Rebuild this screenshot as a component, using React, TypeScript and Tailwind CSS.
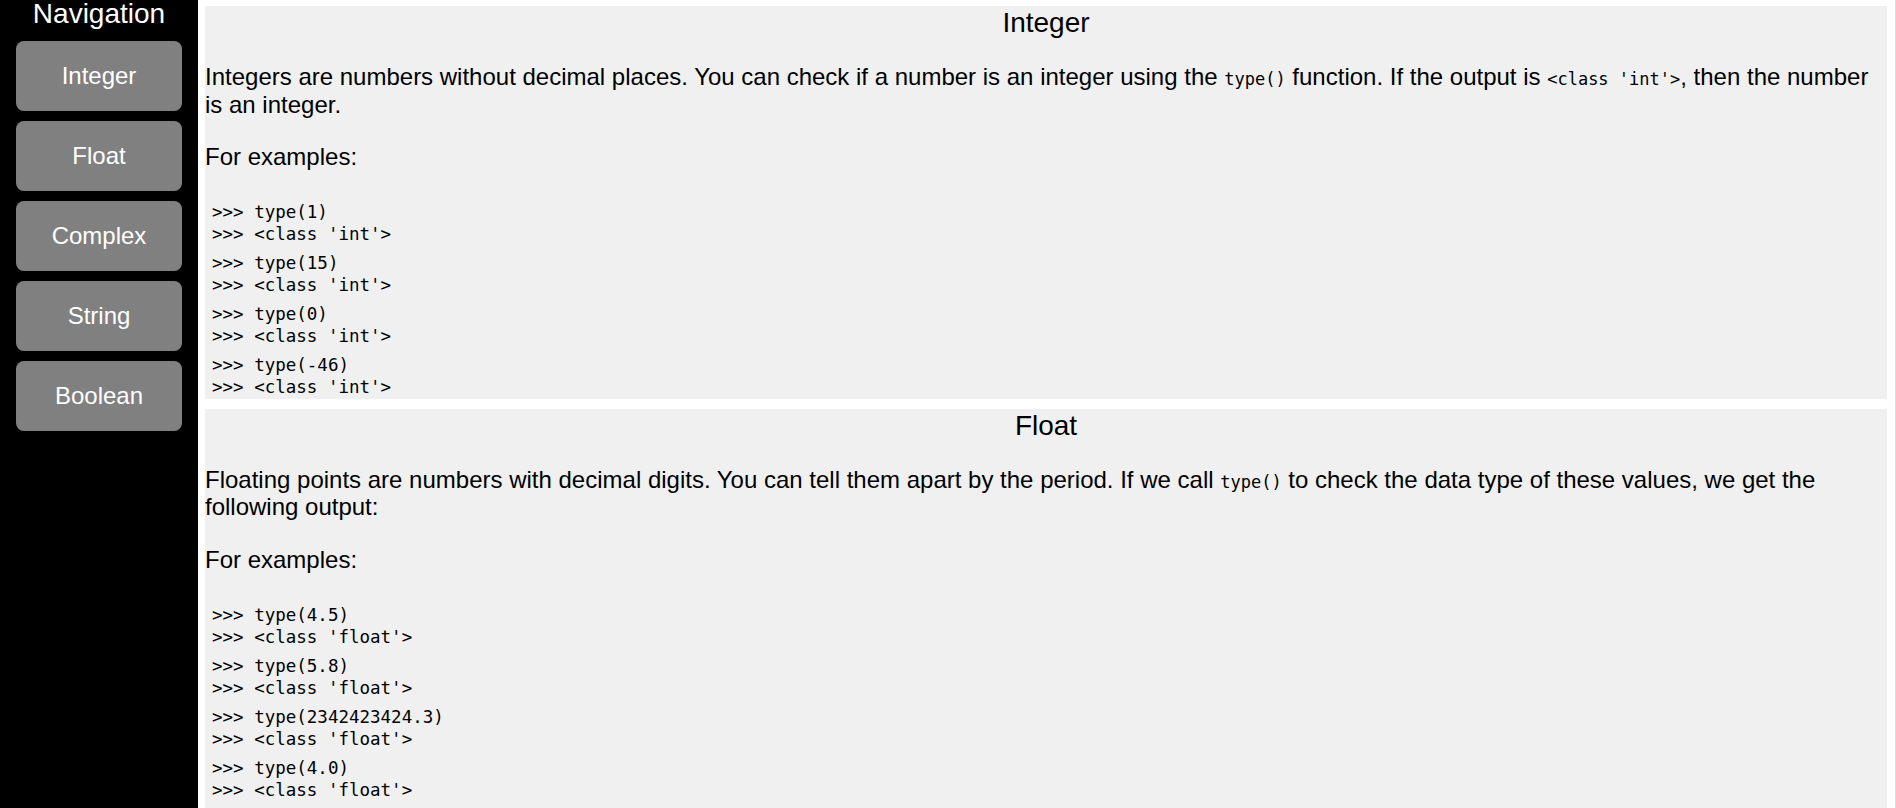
import React from "react";

const navItems = ["Integer", "Float", "Complex", "String", "Boolean"];

type Section = {
  title: string;
  body: React.ReactNode;
  examples: [string, string][];
};

const Code = ({ children }: { children: React.ReactNode }) => (
  <code className="font-['DejaVu_Sans_Mono','Liberation_Mono',monospace] text-[17px] leading-none">{children}</code>
);

const sections: Section[] = [
  {
    title: "Integer",
    body: (
      <>
        Integers are numbers without decimal places. You can check if a number is an integer using the{" "}
        <Code>type()</Code> function. If the output is <Code>{"<class 'int'>"}</Code>, then the number is an integer.
      </>
    ),
    examples: [
      [">>> type(1)", ">>> <class 'int'>"],
      [">>> type(15)", ">>> <class 'int'>"],
      [">>> type(0)", ">>> <class 'int'>"],
      [">>> type(-46)", ">>> <class 'int'>"],
    ],
  },
  {
    title: "Float",
    body: (
      <>
        Floating points are numbers with decimal digits. You can tell them apart by the period. If we call{" "}
        <Code>type()</Code> to check the data type of these values, we get the following output:
      </>
    ),
    examples: [
      [">>> type(4.5)", ">>> <class 'float'>"],
      [">>> type(5.8)", ">>> <class 'float'>"],
      [">>> type(2342423424.3)", ">>> <class 'float'>"],
      [">>> type(4.0)", ">>> <class 'float'>"],
    ],
  },
];

export default function App() {
  return (
    <div className="flex min-h-screen bg-white border-r border-[#dcdcdc] font-['Liberation_Sans',Arial,sans-serif] text-black">
      <aside className="w-[198px] shrink-0 bg-black flex flex-col">
        <h2 className="text-[28px] leading-[28px] text-white text-center font-normal">Navigation</h2>
        <nav className="mt-[13px] flex flex-col gap-[10px] px-[16px]">
          {navItems.map((item) => (
            <div
              key={item}
              className="h-[70px] rounded-[8px] bg-[#808080] text-white text-[24px] flex items-center justify-center"
            >
              {item}
            </div>
          ))}
        </nav>
      </aside>
      <main className="flex-1 pl-[7px] pt-[6px] pr-[8px] flex flex-col gap-[10px]">
        {sections.map((s, i) => (
          <section key={s.title} className={i === sections.length - 1 ? "bg-[#f0f0f0] pb-[12px]" : "bg-[#f0f0f0]"}>
            <h2 className="text-[28px] leading-[33px] text-center font-normal">{s.title}</h2>
            <p className="mt-[24px] text-[24px] leading-[27.6px]">{s.body}</p>
            <p className="mt-[25px] text-[24px] leading-[27.6px]">For examples:</p>
            <div className="mt-[30px] flex flex-col gap-[6px] pl-[7px] font-['DejaVu_Sans_Mono','Liberation_Mono',monospace] text-[17.5px] leading-[22.5px] whitespace-pre">
              {s.examples.map(([a, b]) => (
                <div key={a}>
                  <div>{a}</div>
                  <div>{b}</div>
                </div>
              ))}
            </div>
          </section>
        ))}
      </main>
    </div>
  );
}
